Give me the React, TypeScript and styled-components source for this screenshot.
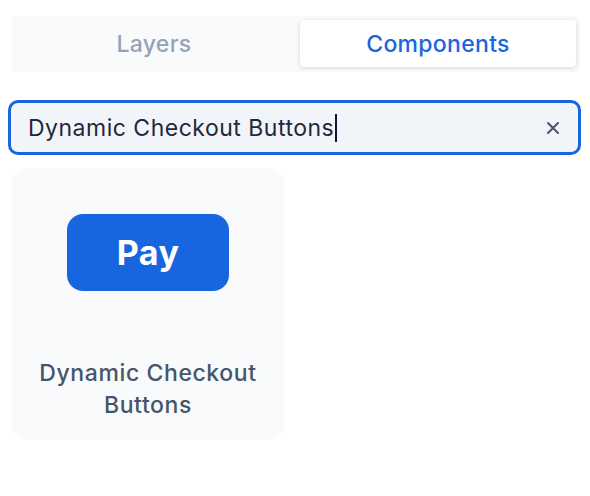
import React, { useState } from 'react'
import styled, { createGlobalStyle } from 'styled-components';

const GlobalStyle = createGlobalStyle`
  body {
    margin: 0;
    background: #ffffff;
    font-family: Inter, "Noto Sans", sans-serif;
  }
`;

const Panel = styled.div`
  width: 590px;
  padding: 16px 9px 0 8px;
  box-sizing: border-box;
  display: flex;
  flex-direction: column;
`;

const Tabs = styled.div`
  margin: 0 0 0 4px;
  width: 568px;
  height: 56px;
  box-sizing: border-box;
  padding: 4px 4px 5px 4px;
  gap: 8px;
  background: #f8fafc;
  border-radius: 4px;
  display: grid;
  grid-template-columns: 1fr 1fr;
`;

const Tab = styled.button<{ $active?: boolean }>`
  border: none;
  border-radius: 4px;
  font-family: inherit;
  font-size: 23px;
  font-weight: 500;
  letter-spacing: 0.3px;
  cursor: pointer;
  background: ${p => (p.$active ? '#ffffff' : 'transparent')};
  color: ${p => (p.$active ? '#1766e0' : '#94a3b8')};
  box-shadow: ${p => (p.$active ? '0 1px 4px rgba(15, 23, 42, 0.15)' : 'none')};
`;

const SearchBox = styled.div`
  margin-top: 28px;
  height: 55px;
  box-sizing: border-box;
  border: 3px solid #1766e0;
  border-radius: 10px;
  background: #f1f5f9;
  display: flex;
  align-items: center;
  padding: 0 18px 0 17px;
`;

const SearchText = styled.div`
  flex: 1;
  font-size: 23px;
  letter-spacing: 0.5px;
  color: #1e293b;
  display: flex;
  align-items: center;
`;

const Caret = styled.span`
  display: inline-block;
  width: 2px;
  height: 28px;
  background: #0f172a;
  margin-left: 1px;
`;

const ClearButton = styled.button`
  border: none;
  background: none;
  padding: 0;
  display: flex;
  color: #475569;
  cursor: pointer;
`;

const Grid = styled.div`
  margin-top: 13px;
  padding-left: 4px;
  display: grid;
  grid-template-columns: 272px;
`;

const Card = styled.div`
  height: 272px;
  background: #f8fafc;
  border-radius: 16px;
  display: flex;
  flex-direction: column;
  align-items: center;
`;

const Preview = styled.div`
  margin-top: 46px;
  width: 162px;
  height: 77px;
  border-radius: 16px;
  background: #1766e0;
  color: #ffffff;
  font-size: 34px;
  font-weight: 700;
  letter-spacing: 0.5px;
  display: flex;
  align-items: center;
  justify-content: center;
`;

const CardLabel = styled.div`
  margin-top: 66px;
  font-size: 23px;
  font-weight: 500;
  letter-spacing: 0.6px;
  line-height: 32px;
  color: #475569;
  text-align: center;
  width: 250px;
`;

export default function App() {
  const [tab, setTab] = useState('components');
  const [query, setQuery] = useState('Dynamic Checkout Buttons');

  return (
    <>
      <GlobalStyle />
      <Panel>
        <Tabs>
          <Tab $active={tab === 'layers'} onClick={() => setTab('layers')}>Layers</Tab>
          <Tab $active={tab === 'components'} onClick={() => setTab('components')}>Components</Tab>
        </Tabs>

        <SearchBox>
          <SearchText>{query}<Caret /></SearchText>
          <ClearButton onClick={() => setQuery('')} aria-label="Clear">
            <svg width="14" height="14" viewBox="0 0 14 14" fill="none" stroke="currentColor" strokeWidth="2" strokeLinecap="round">
              <path d="M2 2L12 12M12 2L2 12" />
            </svg>
          </ClearButton>
        </SearchBox>

        <Grid>
          <Card>
            <Preview>Pay</Preview>
            <CardLabel>Dynamic Checkout Buttons</CardLabel>
          </Card>
        </Grid>
      </Panel>
    </>
  )
}
